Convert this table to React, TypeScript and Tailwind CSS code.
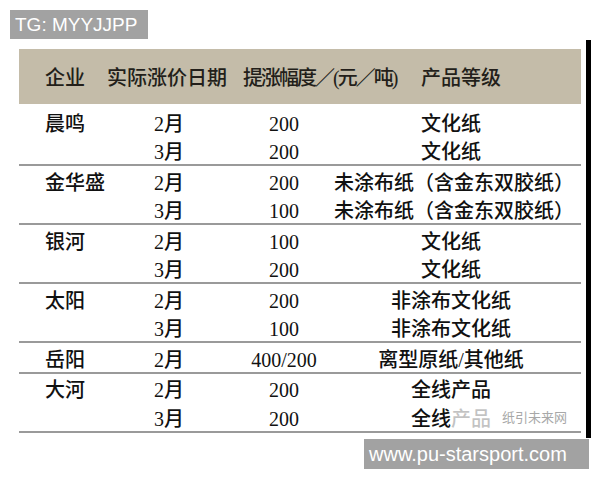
const blocks = [
  {
    name: "晨鸣",
    rows: [
      { month: "2月", rise: "200", grade: "文化纸" },
      { month: "3月", rise: "200", grade: "文化纸" },
    ],
  },
  {
    name: "金华盛",
    rows: [
      { month: "2月", rise: "200", grade: "未涂布纸（含金东双胶纸）" },
      { month: "3月", rise: "100", grade: "未涂布纸（含金东双胶纸）" },
    ],
  },
  {
    name: "银河",
    rows: [
      { month: "2月", rise: "100", grade: "文化纸" },
      { month: "3月", rise: "200", grade: "文化纸" },
    ],
  },
  {
    name: "太阳",
    rows: [
      { month: "2月", rise: "200", grade: "非涂布文化纸" },
      { month: "3月", rise: "100", grade: "非涂布文化纸" },
    ],
  },
  {
    name: "岳阳",
    rows: [{ month: "2月", rise: "400/200", grade: "离型原纸/其他纸" }],
  },
  {
    name: "大河",
    rows: [
      { month: "2月", rise: "200", grade: "全线产品" },
      { month: "3月", rise: "200", grade: "" },
    ],
  },
];

function Row({
  name,
  month,
  rise,
  grade,
  faded,
}: {
  name: string;
  month: string;
  rise: string;
  grade: string;
  faded?: boolean;
}) {
  return (
    <div className="grid h-[28.5px] grid-cols-[135px_80px_100px_234px] items-center pt-[5px] leading-none">
      <span className="pl-[26px]">{name}</span>
      <span>{month}</span>
      <span className="text-center">{rise}</span>
      {faded ? (
        <span className="relative text-center">
          全线<span className="opacity-25">产品</span>
          <span className="absolute left-[168px] top-[2px] text-[13px] font-normal text-[#a8a8a8]">
            纸引未来网
          </span>
        </span>
      ) : (
        <span className="text-center">{grade}</span>
      )}
    </div>
  );
}

export default function App() {
  return (
    <div className="relative h-[480px] w-[600px] overflow-hidden bg-white">
      <div className="flex pt-[40px]">
        <div className="ml-[19px] mt-[9px] w-[562px] font-['Liberation_Serif','Noto_Sans_CJK_SC',serif] text-[20px] font-medium text-[#111]">
          <div className="flex h-[55px] items-center bg-[#c4bca9] pl-[26px] pt-[3px] leading-none text-[#231f1a]">
            <span className="w-[62px]">企业</span>
            <span className="w-[136px]">实际涨价日期</span>
            <span className="w-[178px] tracking-[-2px]">提涨幅度／(元／吨)</span>
            <span>产品等级</span>
          </div>
          {blocks.map((block, bi) => (
            <div
              key={block.name}
              className={`border-b-2 border-[#9a9a9a] ${bi === 0 ? "pt-[3px]" : ""}`}
            >
              {block.rows.map((row, ri) => (
                <Row
                  key={row.month}
                  name={ri === 0 ? block.name : ""}
                  month={row.month}
                  rise={row.rise}
                  grade={row.grade}
                  faded={block.name === "大河" && ri === 1}
                />
              ))}
            </div>
          ))}
        </div>
        <div className="ml-[5px] h-[398px] w-[5px] bg-black" />
      </div>

      <div className="absolute left-[10px] top-[10px] flex h-[29px] w-[138px] items-center bg-[#a2a2a2] pl-[5px] font-['Liberation_Sans',sans-serif] text-[19px] leading-none text-white">
        TG: MYYJJPP
      </div>
      <div className="absolute left-[364px] top-[439px] flex h-[30px] w-[225px] items-center bg-[#a2a2a2] pl-[5px] font-['Liberation_Sans',sans-serif] text-[20px] leading-none text-white">
        www.pu-starsport.com
      </div>
    </div>
  );
}
